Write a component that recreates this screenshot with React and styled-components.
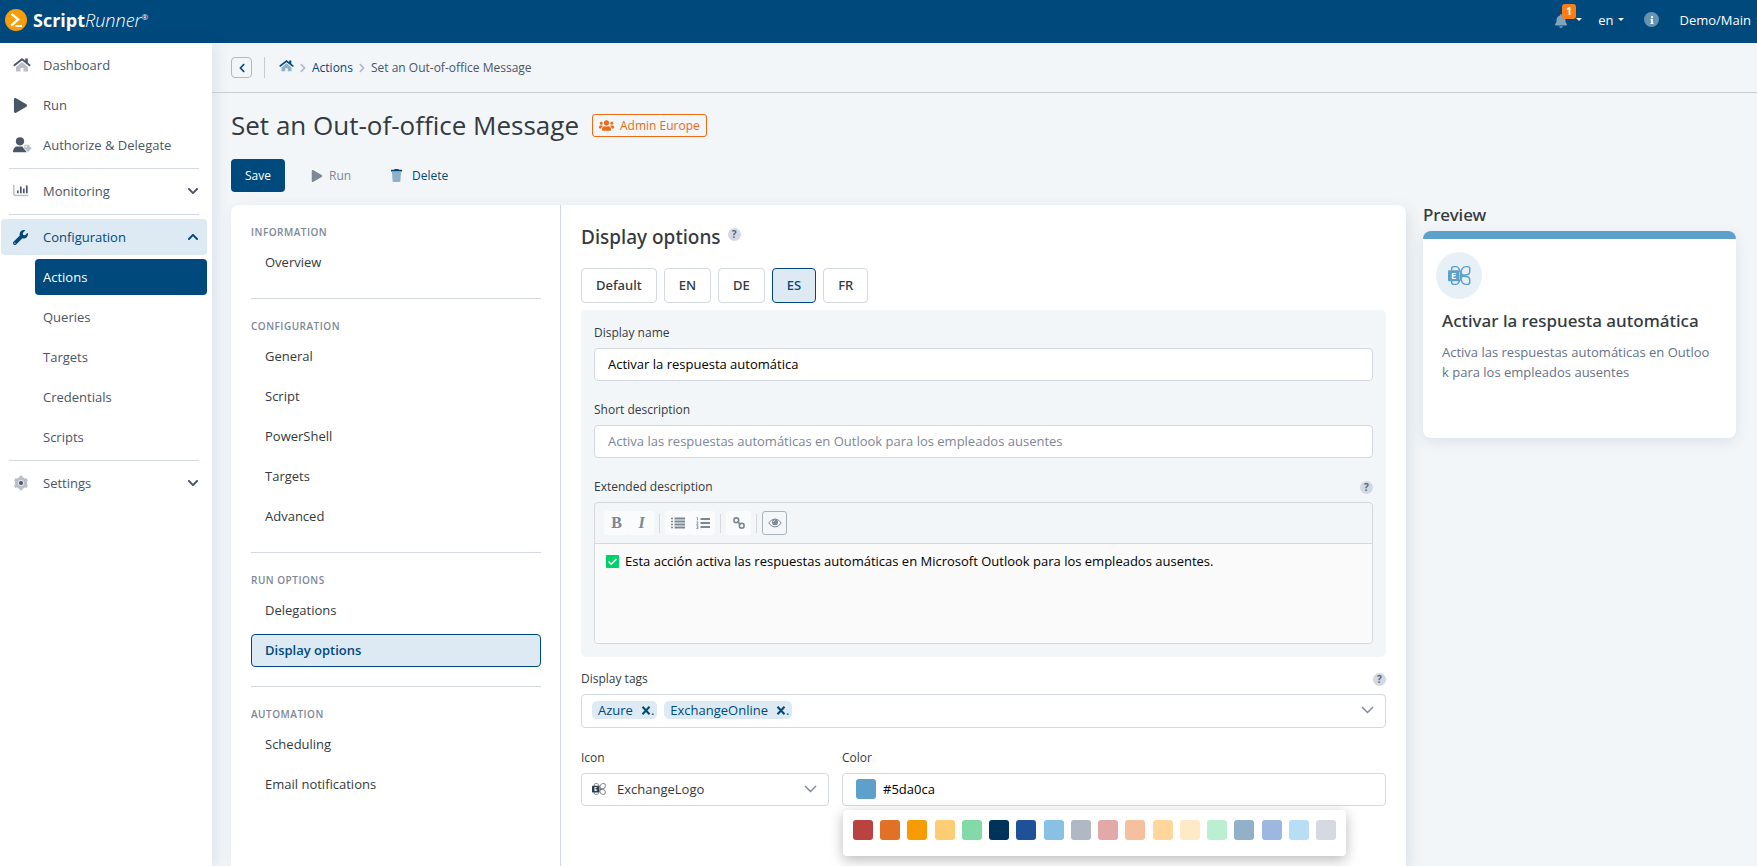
import { useState } from "react";
import styled, { createGlobalStyle } from "styled-components";
import {
  FaBell,
  FaChevronDown,
  FaChevronLeft,
  FaChevronRight,
  FaChevronUp,
  FaInfo,
  FaPlay,
  FaUsers,
  FaWrench,
} from "react-icons/fa";

const GlobalStyle = createGlobalStyle`
  * {
    box-sizing: border-box;
  }

  body {
    margin: 0;
    overflow: hidden;
    background-color: #f2f6f9;
    color: #343a40;
    font-family: "Open Sans", "Noto Sans", sans-serif;
    font-size: 13px;
  }

  button,
  input,
  select {
    font-family: inherit;
  }

  button {
    cursor: pointer;
  }

  a {
    color: inherit;
    text-decoration: none;
  }
`;

const Page = styled.div`
  height: 100vh;
  display: flex;
  flex-direction: column;
`;

const TopBar = styled.header`
  height: 43px;
  flex-shrink: 0;
  padding-left: 5px;
  padding-bottom: 4px;
  display: flex;
  align-items: center;
  justify-content: space-between;
  background-color: #00497d;
  color: white;
  overflow: hidden;
`;

const Logo = styled.a`
  display: flex;
  align-items: center;
  gap: 6px;
  font-size: 18px;
  line-height: 24px;
  font-weight: 700;

  em {
    font-weight: 300;
  }

  sup {
    font-size: 8px;
    font-weight: 400;
    line-height: 8px;
    vertical-align: 7px;
  }
`;

const TopMenu = styled.div`
  margin-right: -5px;
  display: flex;
  align-items: center;
  gap: 16px;
`;

const TopButton = styled.button`
  padding: 0;
  display: flex;
  align-items: center;
  gap: 5px;
  border: none;
  background: none;
  color: white;
  font-size: 13px;
  white-space: nowrap;
`;

const Caret = styled.span`
  border: 3px solid transparent;
  border-top-color: ${(props) => props.color || "white"};
  border-bottom: none;
`;

const BellWrapper = styled.span`
  width: 17px;
  height: 16px;
  position: relative;
  display: flex;
  align-items: flex-end;
  color: #7fa3be;
`;

const Badge = styled.span`
  width: 14px;
  height: 15px;
  position: absolute;
  top: -8px;
  left: 8px;
  border-radius: 3px;
  background-color: #ff7d17;
  color: white;
  font-size: 10px;
  font-weight: 700;
  line-height: 15px;
  text-align: center;
`;

const InfoDot = styled.button`
  width: 15px;
  height: 15px;
  margin: 0 4px;
  padding: 0;
  display: flex;
  align-items: center;
  justify-content: center;
  border: none;
  border-radius: 50%;
  background-color: #6693b3;
  color: white;
  font-size: 8px;
`;

const Body = styled.div`
  flex: 1;
  min-height: 0;
  display: flex;
`;

const Sidebar = styled.nav`
  width: 212px;
  flex-shrink: 0;
  padding: 4px 5px 0 1px;
  display: flex;
  flex-direction: column;
  gap: 4px;
  background-color: white;
  box-shadow: 4px 0 14px rgba(40, 60, 90, 0.1);
`;

const SideItem = styled.a`
  height: 36px;
  flex-shrink: 0;
  padding: 0 8px 0 12px;
  display: flex;
  align-items: center;
  border-radius: 4px;
  background-color: ${(props) => (props.$open ? "#dde9f3" : "transparent")};
  color: ${(props) => (props.$open ? "#00497d" : "#4a5568")};

  span {
    flex: 1;
  }
`;

const SideIcon = styled.i`
  width: 30px;
  display: flex;
  align-items: center;
`;

const SubItem = styled.a`
  height: 36px;
  flex-shrink: 0;
  margin-left: 34px;
  padding-left: 8px;
  border-radius: 4px;
  background-color: ${(props) => (props.$active ? "#00497d" : "transparent")};
  color: ${(props) => (props.$active ? "white" : "#4a5568")};
  line-height: 36px;
`;

const SideLine = styled.hr`
  width: 190px;
  margin: 1px 0 0 8px;
  border: none;
  border-top: 1px solid #d3d8e2;
`;

const Main = styled.main`
  flex: 1;
  min-width: 0;
  display: flex;
  flex-direction: column;
`;

const BreadcrumbBar = styled.div`
  height: 50px;
  flex-shrink: 0;
  padding-left: 19px;
  display: flex;
  align-items: center;
  border-bottom: 1px solid #c8ccd2;
  color: #00497d;
  font-size: 12px;
`;

const BackButton = styled.button`
  width: 21px;
  height: 21px;
  padding: 0;
  display: flex;
  align-items: center;
  justify-content: center;
  border: 1px solid #b0b7c5;
  border-radius: 4px;
  background: none;
  color: #00497d;
  font-size: 10px;
`;

const VerticalLine = styled.span`
  width: 1px;
  height: 21px;
  margin: 0 14px 0 12px;
  background-color: #c8ccd2;
`;

const Crumbs = styled.div`
  display: flex;
  align-items: center;
  gap: 4px;

  > svg {
    color: #b0b7c5;
    font-size: 10px;
  }

  span {
    color: #4a5568;
  }
`;

const TitleRow = styled.div`
  margin-top: 14px;
  padding-left: 19px;
  display: flex;
  align-items: center;
  gap: 13px;
`;

const Title = styled.h1`
  margin: 0;
  font-size: 26px;
  font-weight: 500;
  line-height: 36px;
`;

const TeamBadge = styled.span`
  height: 23px;
  padding: 0 6px;
  display: flex;
  align-items: center;
  gap: 6px;
  border: 1px solid #f06a12;
  border-radius: 3px;
  color: #f06a12;
  font-size: 12px;
`;

const ActionBar = styled.div`
  margin: 16px 0 13px;
  padding-left: 19px;
  display: flex;
  gap: 12px;
`;

const ActionButton = styled.button`
  height: 33px;
  padding: 0 14px;
  display: flex;
  align-items: center;
  gap: ${(props) => props.$gap || 0}px;
  border: none;
  border-radius: 4px;
  background-color: ${(props) => (props.$primary ? "#00497d" : "transparent")};
  color: ${(props) => (props.$primary ? "white" : "#00497d")};
  font-size: 12px;

  &:disabled {
    color: #7d8797;
  }
`;

const Columns = styled.div`
  flex: 1;
  min-height: 0;
  padding: 0 21px 0 19px;
  display: flex;
  gap: 17px;
`;

const Card = styled.section`
  flex: 1;
  min-width: 0;
  display: flex;
  border-radius: 8px 8px 0 0;
  background-color: white;
  box-shadow: 4px 4px 14px rgba(40, 60, 90, 0.1);
`;

const OptionNav = styled.nav`
  width: 330px;
  flex-shrink: 0;
  padding: 0 19px 0 20px;
  border-right: 1px solid #d3d8e2;
`;

const NavGroup = styled.div`
  padding: 20px 0 19px;
  display: flex;
  flex-direction: column;
  gap: 7px;

  & + & {
    border-top: 1px solid #d3d8e2;
  }
`;

const NavHeading = styled.h2`
  margin: 0;
  color: #7d8797;
  font-size: 10px;
  font-weight: 600;
  line-height: 14px;
  letter-spacing: 0.05em;
  text-transform: uppercase;
`;

const NavLink = styled.a`
  height: 33px;
  padding: 0 13px;
  border: 1px solid ${(props) => (props.$active ? "#00497d" : "transparent")};
  border-radius: 4px;
  background-color: ${(props) => (props.$active ? "#dde9f3" : "transparent")};
  color: ${(props) => (props.$active ? "#00497d" : "#343a40")};
  font-weight: ${(props) => (props.$active ? 600 : 400)};
  line-height: 30px;
`;

const Panel = styled.div`
  flex: 1;
  min-width: 0;
  padding: 18px 20px 0;
`;

const PanelTitle = styled.h2`
  margin: 0;
  display: flex;
  align-items: flex-start;
  gap: 7px;
  font-family: "Noto Sans", sans-serif;
  font-size: 19px;
  font-weight: 500;
  line-height: 28px;

  button {
    margin-top: 5px;
  }
`;

const HelpButton = styled.button`
  width: 13px;
  height: 13px;
  padding: 0;
  border: none;
  border-radius: 50%;
  background-color: #d3d8e2;
  color: #5b6779;
  font-size: 10px;
  font-weight: 700;
  line-height: 13px;
`;

const Tabs = styled.div`
  margin: 17px 0 7px;
  display: flex;
  gap: 7px;
`;

const Tab = styled.button`
  height: 35px;
  padding: 0 14px 1px;
  border: 1px solid ${(props) => (props.$active ? "#00497d" : "#d3d8e2")};
  border-radius: 4px;
  background-color: ${(props) => (props.$active ? "#dde9f3" : "white")};
  color: ${(props) => (props.$active ? "#00497d" : "#343a40")};
  font-family: "Noto Sans", sans-serif;
  font-size: 13px;
  font-weight: 500;
`;

const LanguageBox = styled.div`
  margin-bottom: 13px;
  padding: 14px 13px 13px;
  display: flex;
  flex-direction: column;
  gap: 20px;
  border-radius: 5px;
  background-color: #f2f6f9;
`;

const Field = styled.div`
  min-width: 0;
  position: relative;
  display: flex;
  flex-direction: column;
  gap: 6px;
`;

const LabelRow = styled.div`
  display: flex;
  align-items: center;
  justify-content: space-between;
`;

const Label = styled.label`
  font-size: 12px;
  line-height: 18px;
`;

const TextInput = styled.input`
  width: 100%;
  height: 33px;
  padding: 0 13px 1px;
  border: 1px solid #d3d8e2;
  border-radius: 4px;
  background-color: white;
  color: black;
  font-size: 13px;

  &::placeholder {
    color: #7d8797;
    opacity: 1;
  }
`;

const Editor = styled.div`
  border: 1px solid #d5d8dc;
  border-radius: 4px;
  overflow: hidden;
`;

const EditorBar = styled.div`
  height: 41px;
  padding-left: 9px;
  display: flex;
  align-items: center;
  border-bottom: 1px solid #d5d8dc;
`;

const EditorButton = styled.button`
  width: 25px;
  height: 24px;
  padding: 0;
  display: flex;
  align-items: center;
  justify-content: center;
  border: 1px solid ${(props) => (props.$active ? "#a9b3bc" : "transparent")};
  border-radius: 3px;
  background-color: ${(props) => (props.$active ? "#f4f7fa" : "#fafbfd")};
  color: #7b8794;
  font-family: "Liberation Serif", serif;
  font-size: 16px;
  font-weight: 700;
`;

const EditorLine = styled.span`
  width: 1px;
  height: 19px;
  margin: 0 5px;
  background-color: #d5d8dc;
`;

const EditorBody = styled.div`
  height: 99px;
  padding: 7px 11px;
  display: flex;
  align-items: flex-start;
  gap: 6px;
  background-color: #fafafa;
  color: black;
  line-height: 20px;
`;

const CheckMark = styled.svg`
  width: 13px;
  height: 13px;
  margin-top: 4px;
  flex-shrink: 0;
`;

const TagBox = styled.div`
  height: 34px;
  padding: 0 11px 2px 10px;
  display: flex;
  align-items: center;
  gap: 7px;
  border: 1px solid #d3d8e2;
  border-radius: 4px;

  input {
    flex: 1;
    min-width: 0;
    border: none;
    outline: none;
  }
`;

const Tag = styled.span`
  height: 18px;
  padding: 0 3px 0 6px;
  display: flex;
  align-items: center;
  border-radius: 5px;
  background-color: #dde9f3;
  color: #00497d;

  button {
    padding: 0;
    margin-left: 8px;
    display: flex;
    align-items: center;
    border: none;
    background: none;
    color: inherit;
    font-size: 13px;
    line-height: 18px;
  }
`;

const FieldRow = styled.div`
  margin-top: 21px;
  display: grid;
  grid-template-columns: 248px 1fr;
  gap: 13px;
`;

const Control = styled.div`
  height: 33px;
  padding: 0 11px 1px 10px;
  display: flex;
  align-items: center;
  gap: 11px;
  border: 1px solid #d3d8e2;
  border-radius: 4px;

  select,
  input {
    flex: 1;
    min-width: 0;
    padding: 0;
    appearance: none;
    border: none;
    outline: none;
    background: none;
    color: #343a40;
    font-size: 13px;
  }
`;

const ColorControl = styled(Control)`
  padding-left: 13px;
  gap: 7px;

  input {
    color: black;
  }
`;

const Swatch = styled.button`
  width: 20px;
  height: 20px;
  padding: 0;
  flex-shrink: 0;
  border: none;
  border-radius: 3px;
  background-color: ${(props) => props.color};
`;

const Palette = styled.div`
  width: 503px;
  height: 46px;
  padding: 10px;
  position: absolute;
  top: 61px;
  left: 1px;
  display: flex;
  justify-content: space-between;
  border-radius: 4px;
  background-color: white;
  box-shadow: 0 4px 14px rgba(0, 0, 0, 0.28);
`;

const PreviewColumn = styled.aside`
  width: 313px;
  flex-shrink: 0;
`;

const PreviewTitle = styled.h2`
  margin: 0 0 6px;
  font-family: "Noto Sans", sans-serif;
  font-size: 17px;
  font-weight: 500;
  line-height: 20px;
`;

const PreviewCard = styled.div`
  min-height: 207px;
  padding: 13px 24px 0 19px;
  border-top: 8px solid #5da0ca;
  border-radius: 8px;
  background-color: white;
  box-shadow: 0 4px 14px rgba(40, 60, 90, 0.1);

  h3 {
    margin: 11px 0 10px;
    font-family: "Noto Sans", sans-serif;
    font-size: 17px;
    font-weight: 500;
    line-height: 22px;
  }

  p {
    margin: 0;
    color: #66738a;
    line-height: 20px;
    word-break: break-all;
  }
`;

const PreviewIcon = styled.div`
  width: 46px;
  height: 47px;
  margin-left: -6px;
  display: flex;
  align-items: center;
  justify-content: center;
  border-radius: 50%;
  background-color: #e7eff7;
  color: #5da0ca;
`;

const ScriptRunnerIcon = () => (
  <svg width="22" height="22" viewBox="0 0 22 22">
    <circle cx="11" cy="11" r="11" fill="#f79c0a" />
    <path
      d="M6.5 4.8l6.6 5.7-6.9 6.2"
      fill="none"
      stroke="white"
      strokeWidth="2.4"
    />
    <path d="M10.5 17h6.5" stroke="white" strokeWidth="2" />
  </svg>
);

const HouseIcon = ({ width, roof, wall }) => (
  <svg width={width} viewBox="0 0 18 14">
    <path d="M9 4l6 5v4.5h-4.5V10h-3v3.5H3V9z" fill={wall} />
    <path d="M12.2 0.6h2.6v5l-2.6-2.2z" fill={roof} />
    <path
      d="M0.8 7.8L9 1.3l8.2 6.5"
      fill="none"
      stroke={roof}
      strokeWidth="1.9"
    />
  </svg>
);

const UserTagIcon = () => (
  <svg width="19" height="16" viewBox="0 0 19 16">
    <circle cx="7" cy="4.3" r="4.1" fill="#4a5568" />
    <path d="M0 15.2c0-4 2-5.8 4.6-5.8h4.8l4.4 5.8z" fill="#4a5568" />
    <path
      d="M11 7.6h4.4l3.4 3.6-3.8 4.2-4-4z"
      fill="#b9bec8"
      stroke="white"
      strokeWidth="0.6"
    />
    <circle cx="13" cy="9.6" r="0.8" fill="white" />
  </svg>
);

const ChartIcon = () => (
  <svg width="16" height="12" viewBox="0 0 16 12">
    <path
      d="M0.8 0v8.5q0 2 2 2H15.5"
      fill="none"
      stroke="#b9bec8"
      strokeWidth="1.5"
    />
    <path
      d="M4.8 8.2V5.6M7.8 8.2V1.5M10.8 8.2V3.4M13.8 8.2V0.6"
      stroke="#4a5568"
      strokeWidth="1.7"
    />
  </svg>
);

const GearIcon = () => (
  <svg width="16" height="16" viewBox="0 0 16 16">
    <circle cx="8" cy="8" r="4.4" fill="none" stroke="#b9bec8" strokeWidth="3.2" />
    <path
      d="M8 0.8v14.4M1.8 4.4l12.4 7.2M14.2 4.4L1.8 11.6"
      stroke="#b9bec8"
      strokeWidth="3"
    />
    <circle cx="8" cy="8" r="3" fill="#e3e6eb" />
    <circle cx="8" cy="8" r="2" fill="#4a5568" />
  </svg>
);

const TrashIcon = () => (
  <svg width="11" height="13" viewBox="0 0 11 13">
    <path d="M1 3h9l-0.6 9q-0.1 1-1 1H2.6q-0.9 0-1-1z" fill="#8fb0c9" />
    <path d="M3.6 0h3.8l0.5 0.8H11v1.7H0V0.8h3.1z" fill="#00497d" />
  </svg>
);

const ArrowDown = () => (
  <svg width="13" height="8" viewBox="0 0 13 8">
    <path
      d="M1 1l5.5 5.5L12 1"
      fill="none"
      stroke="#7d8797"
      strokeWidth="1.4"
    />
  </svg>
);

const ListIcon = ({ ordered }) => (
  <svg width="14" height="12" viewBox="0 0 14 12">
    <path
      d={
        ordered
          ? "M4.5 2h9.5M4.5 6h9.5M4.5 10h9.5"
          : "M3.5 1.5h10.5M3.5 4.5h10.5M3.5 7.5h10.5M3.5 10.5h10.5"
      }
      stroke="currentColor"
      strokeWidth={ordered ? 2 : 1.9}
    />
    <path
      d={
        ordered
          ? "M0.5 0.6h1v2.8M0.3 4.9h1.7v1L0.5 7.4h2M0.3 8.8h1.6v1.3H1h0.9v1.4H0.3"
          : "M0 1.5h2M0 4.5h2M0 7.5h2M0 10.5h2"
      }
      fill="none"
      stroke="currentColor"
      strokeWidth={ordered ? 0.8 : 1.6}
    />
  </svg>
);

const LinkIcon = () => (
  <svg width="12" height="12" viewBox="0 0 12 12">
    <g fill="none" stroke="currentColor" strokeWidth="1.6">
      <circle cx="3.3" cy="3.3" r="2.4" />
      <circle cx="8.7" cy="8.7" r="2.4" />
      <path d="M4.2 4.2l3.6 3.6" />
    </g>
  </svg>
);

const EyeIcon = () => (
  <svg width="14" height="10" viewBox="0 0 14 10">
    <path
      d="M0.7 5q2.7-4 6.3-4t6.3 4q-2.7 4-6.3 4T0.7 5z"
      fill="none"
      stroke="currentColor"
    />
    <circle cx="7" cy="4.3" r="3" fill="currentColor" />
    <path d="M5.4 4.2q0-1.6 1.6-1.6" fill="none" stroke="white" strokeWidth="0.7" />
  </svg>
);

const ExchangeIcon = ({ size, color, tile }) => (
  <svg width={size} height={size} viewBox="0 0 22 22">
    <g fill="none" stroke={color} strokeWidth="1.4">
      <path d="M3.5 6V4.5q0-2 2-2h2.2q1.6 0 2.4 1.6L14 11l-3.9 6.9q-0.8 1.6-2.4 1.6H5.5q-2 0-2-2V16" />
      <path d="M12 10.8q0.5-8.3 5-8.3h1.800q2 0 2 2v2.500q0 3.300-3.500 3.500z" />
      <path d="M12 11.500q0.500 8 5 8h1.800q2 0 2-2v-2q0-3.300-3.500-3.500z" />
    </g>
    <rect x="0" y="6" width="11" height="10.5" rx="1" fill={tile || color} />
    <text
      x="5.5"
      y="14.5"
      fill="white"
      fontFamily="Open Sans"
      fontSize="9"
      fontWeight="700"
      textAnchor="middle"
    >
      E
    </text>
  </svg>
);

const navGroups = [
  { title: "Information", items: ["Overview"] },
  {
    title: "Configuration",
    items: ["General", "Script", "PowerShell", "Targets", "Advanced"],
  },
  { title: "Run options", items: ["Delegations", "Display options"] },
  { title: "Automation", items: ["Scheduling", "Email notifications"] },
];

const subItems = ["Actions", "Queries", "Targets", "Credentials", "Scripts"];

const languages = ["Default", "EN", "DE", "ES", "FR"];

const colors = [
  "#ba4340",
  "#e17124",
  "#f79c00",
  "#fdcd76",
  "#83d9a7",
  "#003359",
  "#1e5197",
  "#89c1e5",
  "#b1b7c4",
  "#e3a8a8",
  "#f4c09d",
  "#ffd69c",
  "#feeac6",
  "#bbefd1",
  "#92b0c7",
  "#9cb8e0",
  "#b8def5",
  "#d5d9e2",
];

const Header = () => (
  <TopBar>
    <Logo href="#">
      <ScriptRunnerIcon />
      <span>
        Script<em>Runner</em>
        <sup>®</sup>
      </span>
    </Logo>
    <TopMenu>
      <TopButton aria-label="Notifications">
        <BellWrapper>
          <FaBell size={14} />
          <Badge>1</Badge>
        </BellWrapper>
        <Caret />
      </TopButton>
      <TopButton>
        en <Caret />
      </TopButton>
      <InfoDot aria-label="Info">
        <FaInfo />
      </InfoDot>
      <TopButton>
        Demo/Main <Caret color="#2fa4e7" />
      </TopButton>
    </TopMenu>
  </TopBar>
);

const SideMenu = () => (
  <Sidebar>
    <SideItem href="#">
      <SideIcon>
        <HouseIcon width={18} roof="#4a5568" wall="#b9bec8" />
      </SideIcon>
      <span>Dashboard</span>
    </SideItem>
    <SideItem href="#">
      <SideIcon>
        <FaPlay size={15} />
      </SideIcon>
      <span>Run</span>
    </SideItem>
    <SideItem href="#">
      <SideIcon>
        <UserTagIcon />
      </SideIcon>
      <span>Authorize &amp; Delegate</span>
    </SideItem>
    <SideLine />
    <SideItem href="#">
      <SideIcon>
        <ChartIcon />
      </SideIcon>
      <span>Monitoring</span>
      <FaChevronDown size={12} />
    </SideItem>
    <SideLine />
    <SideItem href="#" $open>
      <SideIcon>
        <FaWrench size={15} />
      </SideIcon>
      <span>Configuration</span>
      <FaChevronUp size={12} />
    </SideItem>
    {subItems.map((item) => (
      <SubItem href="#" key={item} $active={item === "Actions"}>
        {item}
      </SubItem>
    ))}
    <SideLine />
    <SideItem href="#">
      <SideIcon>
        <GearIcon />
      </SideIcon>
      <span>Settings</span>
      <FaChevronDown size={12} />
    </SideItem>
  </Sidebar>
);

const App = () => {
  const [language, setLanguage] = useState("ES");
  const [name, setName] = useState("Activar la respuesta automática");
  const [color, setColor] = useState("#5da0ca");

  return (
    <Page>
      <GlobalStyle />
      <Header />
      <Body>
        <SideMenu />
        <Main>
          <BreadcrumbBar>
            <BackButton aria-label="Back">
              <FaChevronLeft />
            </BackButton>
            <VerticalLine />
            <Crumbs>
              <a href="#" aria-label="Home">
                <HouseIcon width={15} roof="#00497d" wall="#8fb0c9" />
              </a>
              <FaChevronRight />
              <a href="#">Actions</a>
              <FaChevronRight />
              <span>Set an Out-of-office Message</span>
            </Crumbs>
          </BreadcrumbBar>
          <TitleRow>
            <Title>Set an Out-of-office Message</Title>
            <TeamBadge>
              <FaUsers size={15} />
              Admin Europe
            </TeamBadge>
          </TitleRow>
          <ActionBar>
            <ActionButton $primary>Save</ActionButton>
            <ActionButton disabled $gap={6}>
              <FaPlay size={12} />
              Run
            </ActionButton>
            <ActionButton $gap={10}>
              <TrashIcon />
              Delete
            </ActionButton>
          </ActionBar>
          <Columns>
            <Card>
              <OptionNav>
                {navGroups.map((group) => (
                  <NavGroup key={group.title}>
                    <NavHeading>{group.title}</NavHeading>
                    {group.items.map((item) => (
                      <NavLink
                        href="#"
                        key={item}
                        $active={item === "Display options"}
                      >
                        {item}
                      </NavLink>
                    ))}
                  </NavGroup>
                ))}
              </OptionNav>
              <Panel>
                <PanelTitle>
                  Display options <HelpButton>?</HelpButton>
                </PanelTitle>
                <Tabs>
                  {languages.map((item) => (
                    <Tab
                      key={item}
                      $active={item === language}
                      onClick={() => setLanguage(item)}
                    >
                      {item}
                    </Tab>
                  ))}
                </Tabs>
                <LanguageBox>
                  <Field>
                    <Label htmlFor="name">Display name</Label>
                    <TextInput
                      id="name"
                      value={name}
                      onChange={(e) => setName(e.target.value)}
                    />
                  </Field>
                  <Field>
                    <Label htmlFor="short">Short description</Label>
                    <TextInput
                      id="short"
                      placeholder="Activa las respuestas automáticas en Outlook para los empleados ausentes"
                    />
                  </Field>
                  <Field>
                    <LabelRow>
                      <Label as="span" id="extended">
                        Extended description
                      </Label>
                      <HelpButton>?</HelpButton>
                    </LabelRow>
                    <Editor>
                      <EditorBar>
                        <EditorButton>B</EditorButton>
                        <EditorButton>
                          <em>I</em>
                        </EditorButton>
                        <EditorLine />
                        <EditorButton aria-label="Bulleted list">
                          <ListIcon />
                        </EditorButton>
                        <EditorButton aria-label="Numbered list">
                          <ListIcon ordered />
                        </EditorButton>
                        <EditorLine />
                        <EditorButton aria-label="Link">
                          <LinkIcon />
                        </EditorButton>
                        <EditorLine />
                        <EditorButton aria-label="Preview" $active>
                          <EyeIcon />
                        </EditorButton>
                      </EditorBar>
                      <EditorBody aria-labelledby="extended">
                        <CheckMark viewBox="0 0 13 13">
                          <rect width="13" height="13" rx="1" fill="#00d26a" />
                          <path
                            d="M2.5 6.5l2.7 2.7 5.3-5.3"
                            fill="none"
                            stroke="white"
                            strokeWidth="1.5"
                          />
                        </CheckMark>
                        Esta acción activa las respuestas automáticas en
                        Microsoft Outlook para los empleados ausentes.
                      </EditorBody>
                    </Editor>
                  </Field>
                </LanguageBox>
                <Field>
                  <LabelRow>
                    <Label htmlFor="tags">Display tags</Label>
                    <HelpButton>?</HelpButton>
                  </LabelRow>
                  <TagBox>
                    {["Azure", "ExchangeOnline"].map((tag) => (
                      <Tag key={tag}>
                        {tag}
                        <button aria-label={"Remove " + tag}>
                          <svg width="10" height="9" viewBox="0 0 10 9">
                            <path
                              d="M1.5 0.8l7 7.4M8.5 0.8l-7 7.4"
                              stroke="currentColor"
                              strokeWidth="2"
                            />
                          </svg>
                          .
                        </button>
                      </Tag>
                    ))}
                    <input id="tags" />
                    <ArrowDown />
                  </TagBox>
                </Field>
                <FieldRow>
                  <Field>
                    <Label htmlFor="icon">Icon</Label>
                    <Control>
                      <ExchangeIcon size={14} color="#6b7280" tile="#343a40" />
                      <select id="icon">
                        <option>ExchangeLogo</option>
                      </select>
                      <ArrowDown />
                    </Control>
                  </Field>
                  <Field>
                    <Label htmlFor="color">Color</Label>
                    <ColorControl>
                      <Swatch color={color} aria-label="Pick a color" />
                      <input
                        id="color"
                        value={color}
                        onChange={(e) => setColor(e.target.value)}
                      />
                    </ColorControl>
                    <Palette>
                      {colors.map((item) => (
                        <Swatch
                          key={item}
                          color={item}
                          aria-label={item}
                          onClick={() => setColor(item)}
                        />
                      ))}
                    </Palette>
                  </Field>
                </FieldRow>
              </Panel>
            </Card>
            <PreviewColumn>
              <PreviewTitle>Preview</PreviewTitle>
              <PreviewCard>
                <PreviewIcon>
                  <ExchangeIcon size={23} color="#5da0ca" />
                </PreviewIcon>
                <h3>{name}</h3>
                <p>
                  Activa las respuestas automáticas en Outlook para los
                  empleados ausentes
                </p>
              </PreviewCard>
            </PreviewColumn>
          </Columns>
        </Main>
      </Body>
    </Page>
  );
};

export default App;
